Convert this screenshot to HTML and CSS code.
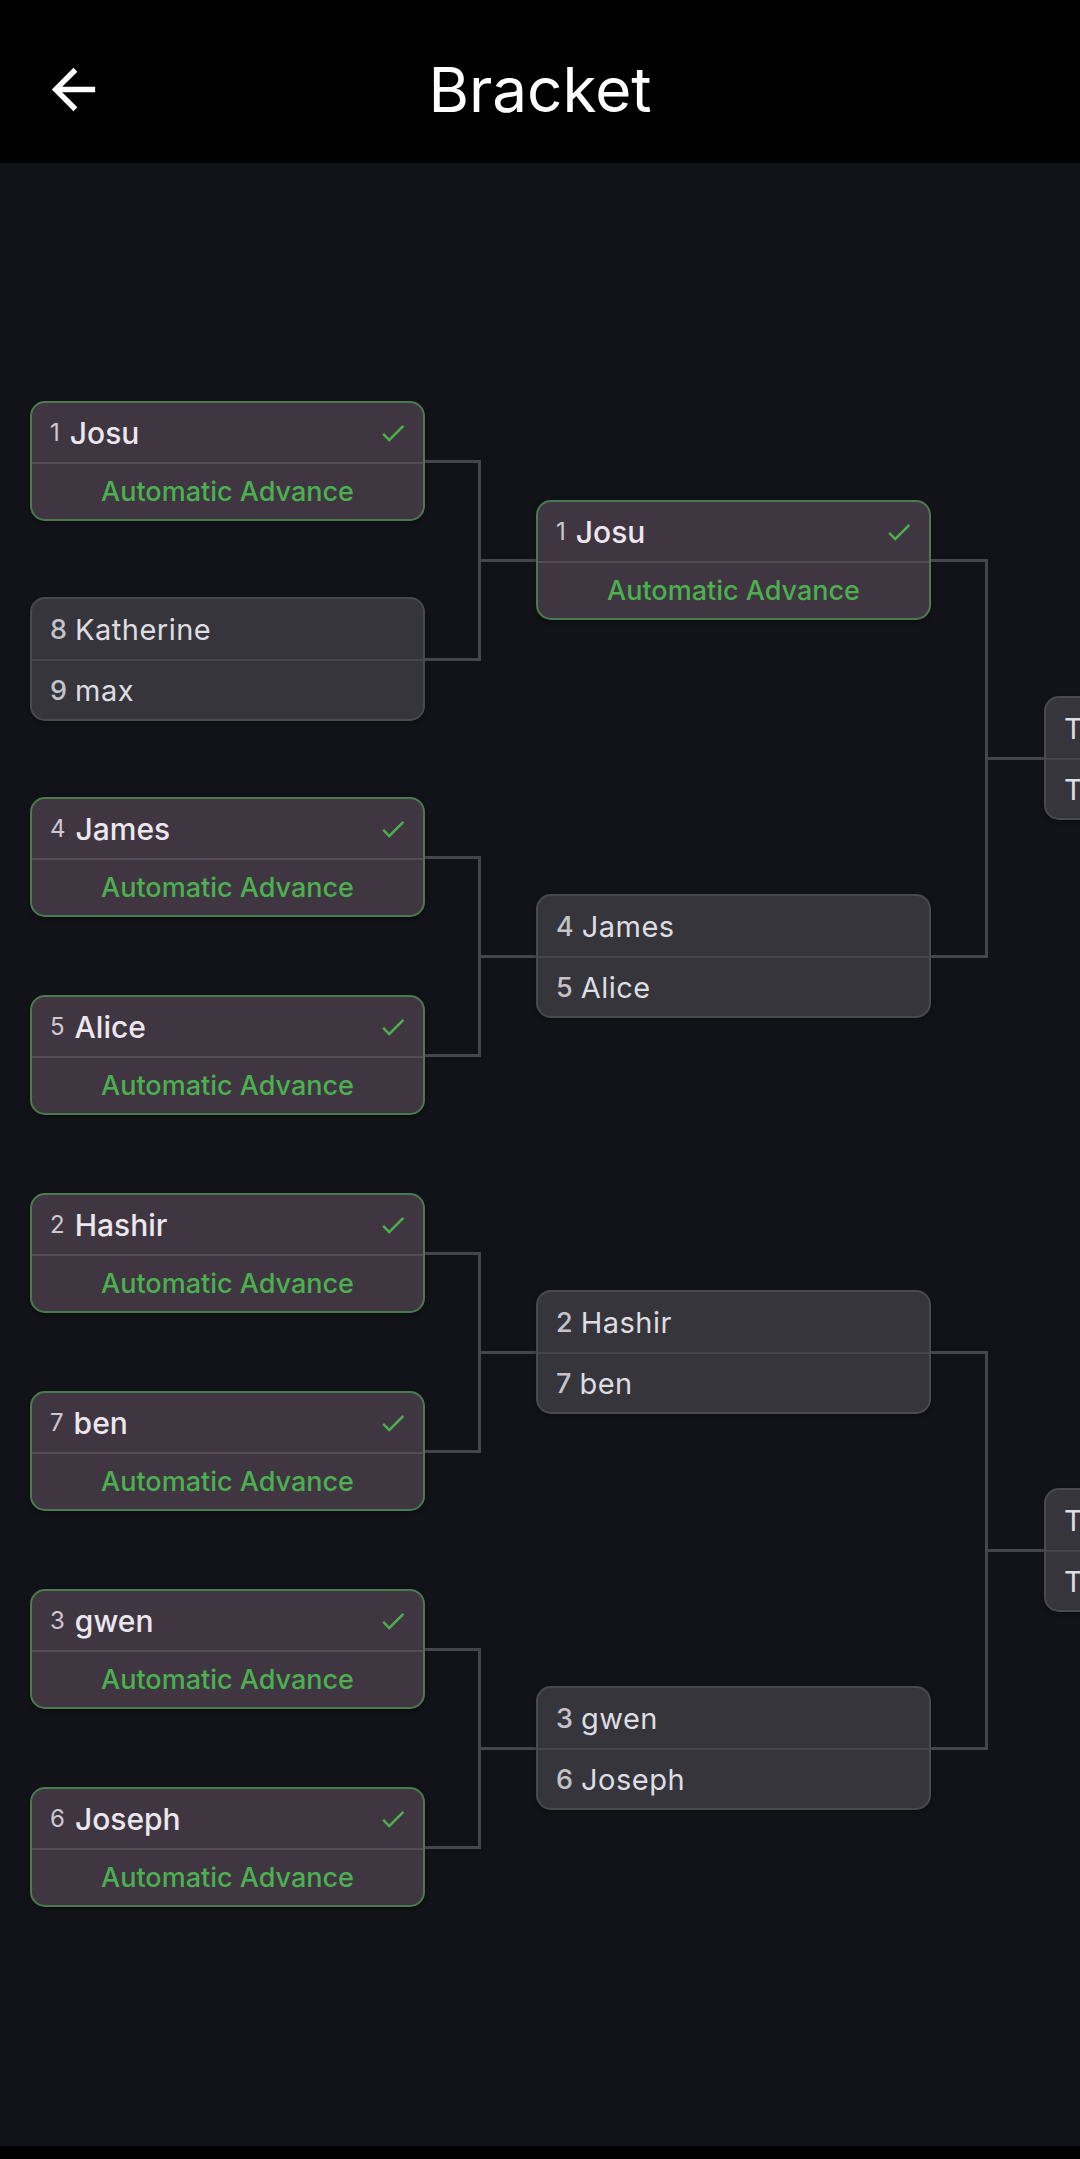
FILE: index.html
```html
<!DOCTYPE html>
<html>
<head>
  <meta charset="utf-8">
  <meta name="viewport" content="width=device-width">
  <title>Bracket</title>
  <link rel="stylesheet" href="styles.css">
</head>
<body>
<header class="bar">
  <button class="back" aria-label="Back">
    <svg viewBox="0 0 24 24"><path d="M20 11H7.83l5.59-5.59L12 4l-8 8 8 8 1.41-1.41L7.83 13H20v-2z"/></svg>
  </button>
  <h1>Bracket</h1>
  <span></span>
</header>

<main class="bracket">
  <!-- round 1 -->
  <div class="round r1">
    <div class="slot"><div class="match win">
      <div class="row"><span class="seed">1</span><span class="name">Josu</span><svg class="tick" viewBox="0 0 24 24"><path d="M9 16.17L4.83 12l-1.42 1.41L9 19 21 7l-1.41-1.41z"/></svg></div>
      <div class="row auto">Automatic Advance</div>
    </div></div>
    <div class="slot"><div class="match">
      <div class="row"><span class="seed">8</span><span class="name">Katherine</span></div>
      <div class="row"><span class="seed">9</span><span class="name">max</span></div>
    </div></div>
    <div class="slot"><div class="match win">
      <div class="row"><span class="seed">4</span><span class="name">James</span><svg class="tick" viewBox="0 0 24 24"><path d="M9 16.17L4.83 12l-1.42 1.41L9 19 21 7l-1.41-1.41z"/></svg></div>
      <div class="row auto">Automatic Advance</div>
    </div></div>
    <div class="slot"><div class="match win">
      <div class="row"><span class="seed">5</span><span class="name">Alice</span><svg class="tick" viewBox="0 0 24 24"><path d="M9 16.17L4.83 12l-1.42 1.41L9 19 21 7l-1.41-1.41z"/></svg></div>
      <div class="row auto">Automatic Advance</div>
    </div></div>
    <div class="slot"><div class="match win">
      <div class="row"><span class="seed">2</span><span class="name">Hashir</span><svg class="tick" viewBox="0 0 24 24"><path d="M9 16.17L4.83 12l-1.42 1.41L9 19 21 7l-1.41-1.41z"/></svg></div>
      <div class="row auto">Automatic Advance</div>
    </div></div>
    <div class="slot"><div class="match win">
      <div class="row"><span class="seed">7</span><span class="name">ben</span><svg class="tick" viewBox="0 0 24 24"><path d="M9 16.17L4.83 12l-1.42 1.41L9 19 21 7l-1.41-1.41z"/></svg></div>
      <div class="row auto">Automatic Advance</div>
    </div></div>
    <div class="slot"><div class="match win">
      <div class="row"><span class="seed">3</span><span class="name">gwen</span><svg class="tick" viewBox="0 0 24 24"><path d="M9 16.17L4.83 12l-1.42 1.41L9 19 21 7l-1.41-1.41z"/></svg></div>
      <div class="row auto">Automatic Advance</div>
    </div></div>
    <div class="slot"><div class="match win">
      <div class="row"><span class="seed">6</span><span class="name">Joseph</span><svg class="tick" viewBox="0 0 24 24"><path d="M9 16.17L4.83 12l-1.42 1.41L9 19 21 7l-1.41-1.41z"/></svg></div>
      <div class="row auto">Automatic Advance</div>
    </div></div>
  </div>

  <div class="links l1">
    <div class="pair"><div class="arm"></div><div class="stub"></div></div>
    <div class="pair"><div class="arm"></div><div class="stub"></div></div>
    <div class="pair"><div class="arm"></div><div class="stub"></div></div>
    <div class="pair"><div class="arm"></div><div class="stub"></div></div>
  </div>

  <!-- round 2 -->
  <div class="round r2">
    <div class="slot"><div class="match win">
      <div class="row"><span class="seed">1</span><span class="name">Josu</span><svg class="tick" viewBox="0 0 24 24"><path d="M9 16.17L4.83 12l-1.42 1.41L9 19 21 7l-1.41-1.41z"/></svg></div>
      <div class="row auto">Automatic Advance</div>
    </div></div>
    <div class="slot"><div class="match">
      <div class="row"><span class="seed">4</span><span class="name">James</span></div>
      <div class="row"><span class="seed">5</span><span class="name">Alice</span></div>
    </div></div>
    <div class="slot"><div class="match">
      <div class="row"><span class="seed">2</span><span class="name">Hashir</span></div>
      <div class="row"><span class="seed">7</span><span class="name">ben</span></div>
    </div></div>
    <div class="slot"><div class="match">
      <div class="row"><span class="seed">3</span><span class="name">gwen</span></div>
      <div class="row"><span class="seed">6</span><span class="name">Joseph</span></div>
    </div></div>
  </div>

  <div class="links l2">
    <div class="pair"><div class="arm"></div><div class="stub"></div></div>
    <div class="pair"><div class="arm"></div><div class="stub"></div></div>
  </div>

  <!-- round 3 -->
  <div class="round r3">
    <div class="slot"><div class="match">
      <div class="row"><span class="name">TBD</span></div>
      <div class="row"><span class="name">TBD</span></div>
    </div></div>
    <div class="slot"><div class="match">
      <div class="row"><span class="name">TBD</span></div>
      <div class="row"><span class="name">TBD</span></div>
    </div></div>
  </div>
</main>

<div class="navbar"></div>
</body>
</html>
```

FILE: styles.css
```css
html, body {margin:0; padding:0; background:#000; font-family:Inter, "Noto Sans", sans-serif;}
body {width:1080px; height:2159px; overflow:hidden;}

.bar {height:163px; box-sizing:border-box; padding-top:16px; display:grid; grid-template-columns:1fr auto 1fr; align-items:center; background:#000;}
.bar h1 {margin:0; font-size:62px; font-weight:400; color:#fff; line-height:1;}
.back {background:none; border:0; padding:0; margin-left:41px; width:65px; height:65px; display:flex;}
.back svg {width:65px; height:65px; fill:#fff;}

.bracket {height:1983px; box-sizing:border-box; padding:199px 0 0 30px; background:#121318; display:flex; overflow:hidden;}

.round {width:395px; flex:none; display:flex; flex-direction:column;}
.r1 .slot {height:198px;}
.r2 .slot {height:396px;}
.r3 .slot {height:792px;}
.slot {display:flex; flex-direction:column; justify-content:center;}

.match {box-sizing:border-box; border:2px solid #4a4950; border-radius:15px; background:#36353b; box-shadow:0 2px 4px rgba(0,0,0,.35);}
.match .row {height:60px; display:flex; align-items:center; padding:0 18px; gap:8px; color:#dedde2; font-size:29px; letter-spacing:.5px;}
.match .row + .row {border-top:2px solid #46454c; height:58px;}
.match .seed {color:#c4c3c9; font-weight:500; font-size:27px; letter-spacing:0;}

.match.win {border-color:#4c7a4f; background:#3f3641;}
.win .row {height:59px; gap:10px;}
.win .row + .row {border-top-color:#554c57; height:55px;}
.win .seed {font-size:24px; font-weight:400; color:#cfc8d1;}
.win .name {font-weight:500; color:#ece6ee; font-size:30px; letter-spacing:0;}
.win .row.auto {justify-content:center; color:#4caf50; font-size:27px; font-weight:500; letter-spacing:0;}
.tick {width:30px; height:30px; margin-left:auto; margin-right:-3px; fill:#4caf50;}

.links {flex:none; display:flex; flex-direction:column;}
.l1 {width:111px;}
.l2 {width:113px;}
.l1 .pair {height:396px;}
.l2 .pair {height:792px;}
.pair {display:flex; align-items:center;}
.arm {box-sizing:border-box; width:56px; border:3px solid #45454d; border-left:0;}
.l1 .arm {height:201px;}
.l2 .arm {height:399px; width:57px;}
.stub {flex:1; height:3px; background:#45454d;}

.navbar {height:13px; background:#000;}
```
